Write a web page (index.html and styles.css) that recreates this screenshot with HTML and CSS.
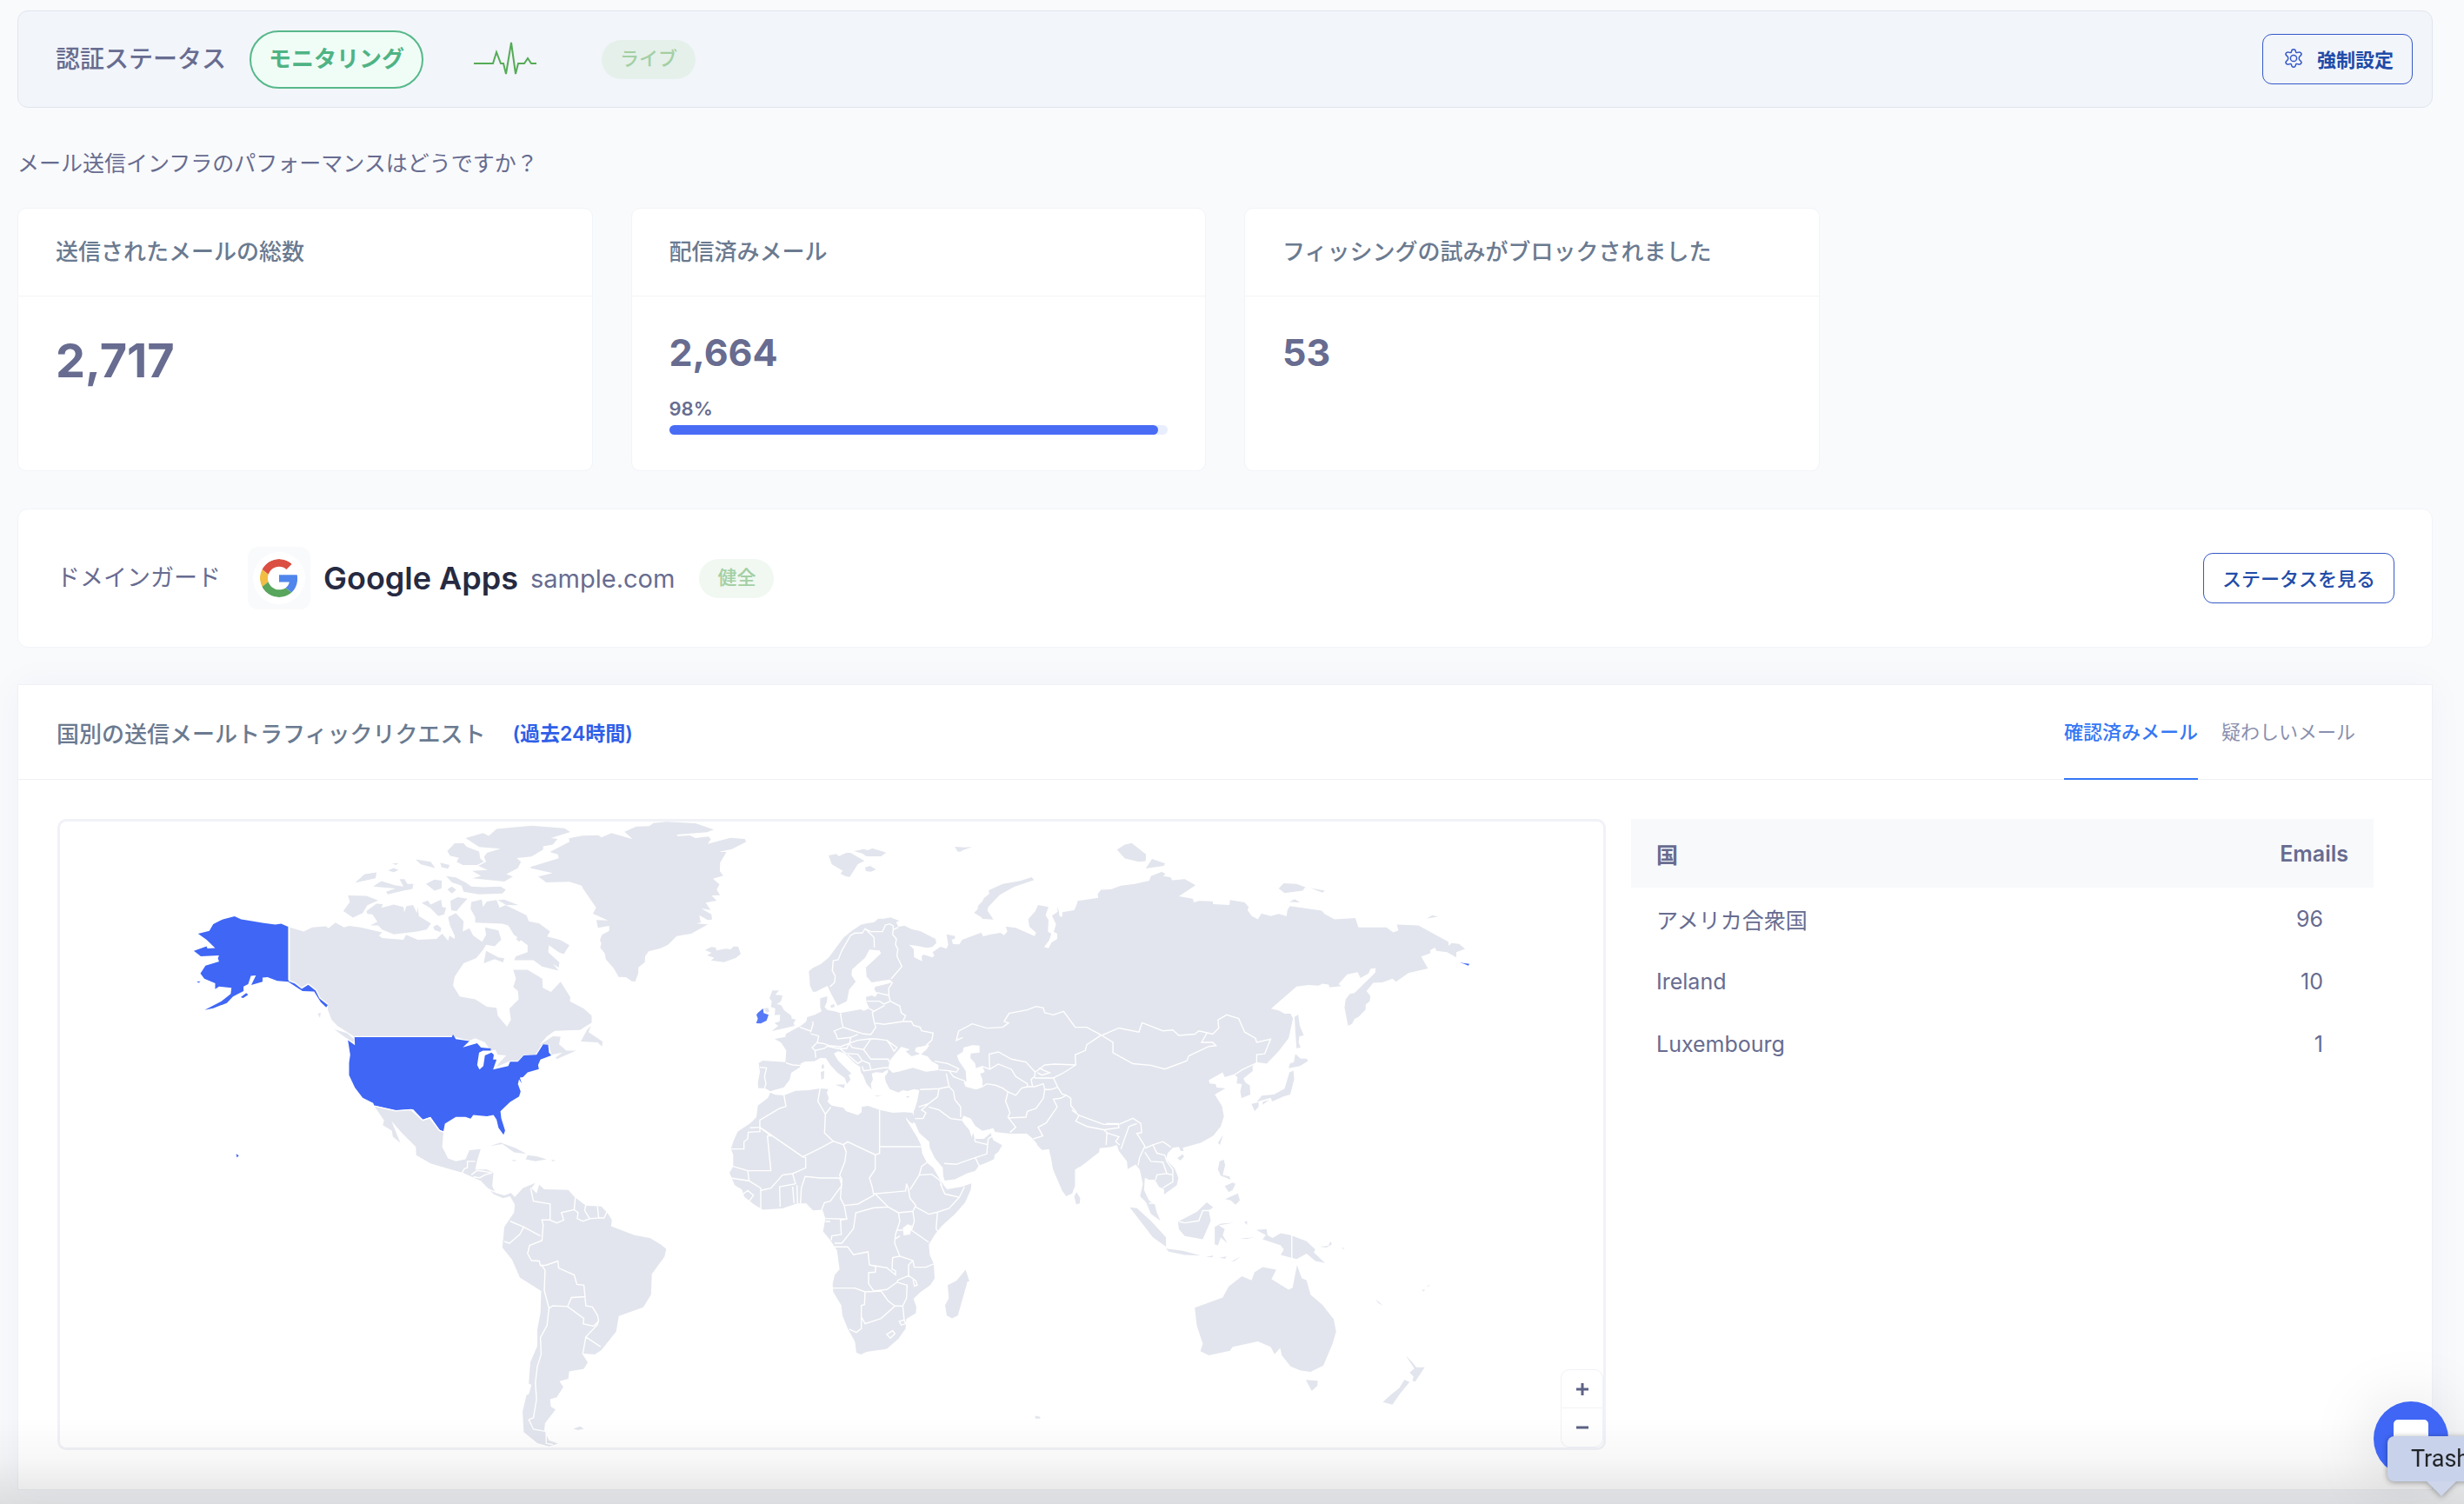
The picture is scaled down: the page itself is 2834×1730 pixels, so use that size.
FILE: index.html
```html
<!DOCTYPE html>
<html lang="ja">
<head>
    <meta charset="UTF-8">
    <meta name="viewport" content="width=device-width, initial-scale=1.0">
    <title>認証ステータス</title>
    <link rel="stylesheet" href="styles.css">
</head>
<body>
    <main class="page">
        <section class="status-bar">
            <h1 class="lead">認証ステータス</h1>
            <span class="mode">モニタリング</span>
            <svg class="pulse" viewBox="0 0 72 44" aria-hidden="true">
                <path d="M0 27h22l4-13 5 13h3l3 12L43 3l5 36 3-12h7l4-6 4 6h6"/>
            </svg>
            <span class="badge badge-live">ライブ</span>
            <button class="btn" type="button">
                <svg class="gear" viewBox="1 1 22 22" aria-hidden="true">
                    <path d="M9.6 4.2C9.8 2.2 10.600 1.800 12 1.800s2.200.4 2.400 2.400c.2 1.300 1 1.700 2.200 1.200 1.900-.8 3.300-.6 4.100.7s.2 2.400-1.400 3.600c-1.400 1.100-1.400 3.500 0 4.600 1.600 1.200 2.200 2.300 1.400 3.600s-2.200 1.500-4.100.7c-1.200-.5-2-.1-2.200 1.200-.2 2-1 2.400-2.400 2.400s-2.200-.4-2.400-2.400c-.2-1.300-1-1.700-2.200-1.200-1.900.8-3.300.6-4.100-.7s-.2-2.400 1.400-3.600c1.400-1.100 1.400-3.500 0-4.600-1.600-1.200-2.200-2.300-1.400-3.600s2.200-1.500 4.100-.7c1.200.5 2 .1 2.200-1.200z"/>
                    <circle cx="12" cy="12" r="3.600"/>
                </svg>
                強制設定
            </button>
        </section>

        <p class="question">メール送信インフラのパフォーマンスはどうですか？</p>

        <section class="cards">
            <article class="card">
                <h2 class="card-title">送信されたメールの総数</h2>
                <div class="card-body"><strong class="number number-big">2,717</strong></div>
            </article>
            <article class="card">
                <h2 class="card-title">配信済みメール</h2>
                <div class="card-body">
                    <strong class="number">2,664</strong>
                    <div class="percent">98%</div>
                    <div class="bar"><div class="bar-fill" style="width: 98%"></div></div>
                </div>
            </article>
            <article class="card">
                <h2 class="card-title">フィッシングの試みがブロックされました</h2>
                <div class="card-body"><strong class="number">53</strong></div>
            </article>
        </section>

        <section class="domain">
            <h2 class="lead lead-light">ドメインガード</h2>
            <span class="provider-logo">
                <svg viewBox="0 0 48 48" aria-hidden="true">
                    <path fill="#db4f42" d="M24 9.500c3.500 0 6.700 1.200 9.200 3.600l6.900-6.900C35.900 2.400 30.500 0 24 0 14.600 0 6.500 5.400 2.600 13.200l8 6.200C12.400 13.700 17.700 9.500 24 9.500z"/>
                    <path fill="#5086ec" d="M47 24.600c0-1.600-.2-3.100-.4-4.600H24v9h12.900c-.6 3-2.200 5.500-4.700 7.200l7.700 6c4.500-4.200 7.100-10.400 7.100-17.600z"/>
                    <path fill="#f1bd42" d="M10.500 28.600a14.500 14.500 0 0 1 0-9.200l-8-6.200a24 24 0 0 0 0 21.600z"/>
                    <path fill="#58a55c" d="M24 48c6.500 0 11.900-2.100 15.900-5.800l-7.700-6c-2.200 1.500-4.900 2.300-8.200 2.300-6.300 0-11.600-4.200-13.500-9.900l-8 6.200C6.500 42.600 14.600 48 24 48z"/>
                </svg>
            </span>
            <strong class="provider">Google Apps</strong>
            <span class="domain-name">sample.com</span>
            <span class="badge">健全</span>
            <button class="btn" type="button">ステータスを見る</button>
        </section>

        <section class="traffic">
            <header class="traffic-head">
                <h2 class="traffic-title">国別の送信メールトラフィックリクエスト</h2>
                <span class="period">(過去24時間)</span>
                <nav class="tabs">
                    <a class="tab active" href="#verified">確認済みメール</a>
                    <a class="tab" href="#suspicious">疑わしいメール</a>
                </nav>
            </header>
            <div class="traffic-body">
                <div class="map">
                    <svg class="world" viewBox="0 0 1775 720" role="img" aria-label="World map">
                        <!-- Americas -->
                        <g transform="translate(-9 -15) scale(.4464 .4719)">
                            <path class="land" d="M611 289L648 300 670 290 705 287 712 292 730 278 752 290 765 286 795 290 850 302 842 310 850 316 905 320 912 308 942 320 990 318 1005 305 1020 322 1024 310 1037 318 1037 310 1025 285 1020 265 1040 255 1060 275 1058 300 1075 292 1085 310 1108 325 1118 308 1115 290 1150 297 1157 320 1140 336 1118 332 1110 345 1092 365 1060 377 1037 410 1033 432 1050 458 1090 465 1120 483 1145 486 1148 505 1172 532 1182 515 1178 488 1202 465 1200 445 1188 435 1195 415 1188 393 1225 393 1263 415 1264 437 1285 447 1310 422 1335 460 1334 470 1370 488 1390 505 1390 522 1360 540 1295 542 1275 555 1255 577 1290 555 1310 556 1306 575 1325 590 1350 590 1300 611 1297 607 1315 595 1286 600 1280 575 1262 575 1245 600 1215 600 1200 615 1180 615 1145 630 1150 622 1170 602 1148 600 1142 588 1130 590 1115 570 1090 560 1075 566 1035 556 779 556 765 548 735 530 720 515 710 490 711 478 690 462 680 443 660 428 643 438 625 423 611 420Z"/>
                            <path class="land" d="M762 212L810 213 840 224 812 236 800 255 775 266 750 250 767 228ZM780 181L805 160 836 156 833 170ZM827 190L848 177 883 187 905 190 895 172 908 172 915 184 931 184 928 196 905 200 865 209 860 203 885 195ZM865 151L880 145 893 150 880 155ZM876 134L893 133 885 138ZM936 124L975 130 987 145 950 136ZM1000 132L1024 138 1020 147 1003 143ZM963 184L985 173 1004 176 1003 195 985 200ZM1018 197L1030 190 1041 198 1030 207ZM810 250L835 232 852 233 848 242 880 234 905 240 907 253 913 238 930 235 940 255 942 240 945 262 976 280 965 295 940 300 880 307 850 295 840 285 820 285 838 276 825 258 812 257ZM952 230L968 224 975 234 1002 222 1005 240 1015 242 1010 258 995 262 975 243ZM1026 225L1045 216 1070 220 1055 235 1042 250 1028 248ZM982 288L992 283 1003 292 1000 301 985 296ZM1015 165L1040 168 1065 180 1080 190 1110 192 1155 190 1169 198 1160 207 1100 209 1060 203 1055 188 1030 180ZM1018 104L1037 85 1060 85 1068 93 1100 105 1103 122 1112 130 1095 138 1058 138 1042 130 1048 120 1025 115ZM1065 72L1110 60 1125 67 1145 50 1235 42 1320 48 1335 57 1285 72 1302 74 1290 88 1265 92 1265 100 1235 117 1197 121 1208 130 1200 145 1170 160 1187 166 1165 178 1083 170 1105 164 1082 152 1122 150 1098 140 1118 130 1113 118 1120 108 1155 98 1100 94ZM1078 245L1080 228 1107 222 1110 240 1120 227 1145 223 1153 242 1168 235 1222 260 1228 275 1255 280 1283 300 1275 312 1308 320 1333 333 1318 355 1305 350 1280 333 1278 350 1307 375 1305 388 1290 378 1305 395 1262 385 1240 370 1190 370 1195 360 1225 350 1225 333 1190 308 1175 285 1160 281 1090 278 1090 265ZM1148 223L1165 222 1202 236 1170 235ZM1195 318L1205 310 1212 318 1203 325ZM1118 347L1150 363 1165 365 1162 375 1140 367 1112 377ZM684 500L692 498 690 510ZM727 538L760 548 778 562 776 570 755 558ZM1362 568L1378 540 1388 530 1382 545 1418 568 1417 580 1405 570Z"/>
                            <path class="land hot" d="M608 288L590 281 575 283 545 279 505 273 487 270 470 263 440 270 415 282 405 298 376 305 398 320 420 340 400 341 398 336 365 347 383 360 430 358 427 365 430 373 395 383 382 402 392 415 420 426 420 440 430 434 462 437 460 452 436 470 393 491 415 487 450 474 466 458 493 445 493 434 505 428 512 408 525 407 513 430 542 422 542 412 555 411 580 420 608 422 645 445 675 446 692 472 706 485 711 478 690 462 680 443 660 428 643 438 625 425 608 418ZM486 460L500 450 505 454 492 462ZM372 422L382 421 378 425ZM474 842L481 846 476 851Z"/>
                            <path class="land hot" d="M779 556L1030 556 1033 551 1040 562 1075 567 1058 582 1095 572 1105 583 1130 585 1130 590 1110 590 1100 595 1095 625 1101 636 1111 628 1115 602 1132 595 1138 600 1136 612 1145 612 1136 636 1175 628 1180 617 1200 617 1215 602 1248 600 1265 575 1278 576 1280 595 1286 602 1258 612 1252 625 1254 635 1225 643 1213 655 1205 656 1210 670 1203 660 1200 672 1207 690 1203 702 1180 715 1155 738 1157 755 1167 785 1163 795 1150 778 1145 758 1137 747 1120 750 1085 747 1078 756 1065 752 1040 752 1012 768 1008 787 998 783 975 752 955 758 930 733 885 736 830 724 827 718 800 705 780 680 765 650 765 620 768 600 762 565 780 577Z"/>
                            <path class="land" d="M830 725L885 737 925 734 955 760 973 754 998 785 1008 790 1005 825 1020 853 1040 860 1065 855 1075 833 1104 830 1095 858 1090 880 1120 880 1137 888 1134 920 1142 937 1165 943 1182 937 1192 947 1213 925 1245 913 1235 925 1248 938 1255 917 1268 928 1330 930 1345 946 1375 968 1415 970 1430 985 1442 1003 1440 1018 1500 1040 1540 1047 1570 1064 1582 1074 1578 1092 1545 1135 1543 1185 1523 1216 1460 1237 1453 1275 1415 1320 1398 1331 1365 1328 1380 1350 1370 1366 1332 1372 1330 1390 1307 1396 1317 1410 1300 1435 1283 1440 1285 1458 1297 1465 1270 1498 1268 1515 1280 1540 1303 1548 1280 1555 1250 1547 1215 1520 1212 1470 1222 1430 1228 1428 1235 1405 1228 1402 1232 1350 1250 1310 1250 1270 1258 1230 1260 1176 1205 1143 1185 1100 1160 1070 1165 1020 1190 985 1192 965 1180 945 1162 950 1137 940 1105 908 1058 888 1020 878 975 865 938 845 937 825 900 790 868 755 865 740 880 775 897 815 878 800 875 785 852 772 855 760Z"/>
                            <path class="land" d="M1128 823L1155 814 1195 828 1222 842 1190 838 1160 818ZM1225 845L1250 848 1274 855 1245 860 1220 855ZM1185 856L1200 858 1188 860ZM1287 856L1298 858 1288 860ZM1343 1512L1360 1506 1370 1512 1355 1515Z"/>
                            <path class="border" d="M611 288L611 420 625 425 643 438 660 428 680 443 690 462 711 478M779 556L1030 556M830 725L885 737 925 734 955 760 973 754 998 785 1008 788"/>
                            <path class="border" d="M1056 888L1062 878 1070 875 1070 860 1090 860M1080 893L1095 882 1130 887M1085 898L1102 900 1115 893 1134 888M1118 925L1140 935M1233 925L1240 957 1283 964 1283 1003 1262 1003 1265 1015 1262 1053 1230 1065 1225 1085 1235 1102 1255 1103 1258 1114 1273 1113 1303 1103 1305 1120 1345 1137 1352 1160 1370 1162 1373 1190 1338 1192 1328 1214 1290 1212 1280 1218 1268 1175 1270 1125 1260 1112M1283 1003L1300 1010 1318 1003 1312 985 1345 978 1348 948M1345 978L1355 985 1353 1000 1368 1006 1385 1000 1372 980 1375 966M1385 1000L1408 998 1405 970M1408 998L1422 998 1430 982M1180 1006L1215 1020 1258 1042M1215 1020L1205 1038 1178 1060 1165 1055M1373 1190L1375 1212 1392 1215 1405 1235 1408 1250 1395 1262 1368 1256 1370 1243 1328 1214M1408 1245L1405 1258 1375 1288 1413 1312M1375 1288L1367 1330M1280 1218L1275 1260 1258 1290 1260 1330 1250 1360 1245 1400 1248 1440 1240 1485 1228 1490 1240 1513 1270 1518M1273 1520L1273 1548 1290 1550"/>
                        </g>
                        <!-- Greenland, Iceland -->
                        <g transform="translate(431 -15) scale(.3333)">
                            <path class="land" d="M330 202L428 172 425 158 397 150 465 115 463 103 510 94 565 92 575 100 610 85 683 106 655 80 695 62 740 61 755 50 800 46 900 51 963 73 940 82 835 90 838 95 880 93 900 102 945 97 953 106 942 122 1020 101 1070 105 1075 115 1025 140 980 150 1007 150 985 187 984 217 996 232 960 242 983 262 973 280 985 299 955 300 973 318 935 325 952 350 920 345 955 365 957 383 942 385 913 368 918 393 903 397 943 400 885 432 835 440 805 470 780 482 738 493 726 510 725 530 703 548 702 570 692 597 680 596 660 582 635 581 618 552 590 520 587 500 571 480 575 465 570 455 577 436 602 422 602 405 563 412 558 385 598 386 546 363 557 342 512 277 507 266 465 253 385 255 357 235 407 223 332 206ZM933 488L955 478 970 480 972 490 1005 484 1022 486 1030 476 1047 476 1056 502 1040 515 998 530 953 524 965 515 940 507 955 498Z"/>
                        </g>
                        <!-- Europe, Africa, Middle East -->
                        <g transform="translate(751 -15) scale(.3333)">
                            <path class="land" d="M345 632L335 612 331 562 345 550 372 537 400 514 450 446 475 425 510 401 532 396 555 393 571 380 590 380 613 376 643 388 632 392 640 408 661 404 685 416 715 423 768 450 771 464 757 478 738 481 700 473 677 470 693 485 694 513 722 527 720 510 727 504 757 514 764 508 758 496 785 477 806 484 812 470 806 434 836 440 834 450 824 452 828 468 850 469 860 453 926 428 932 441 960 434 992 429 1005 437 1016 424 1010 407 1045 412 1110 440 1115 428 1092 408 1088 382 1112 355 1122 333 1158 340 1148 368 1158 385 1156 425 1168 432 1160 455 1143 478 1158 482 1168 463 1188 450 1188 432 1176 425 1184 400 1170 370 1190 356 1188 338 1194 355 1196 372 1205 374 1206 358 1250 350 1267 361 1257 320 1262 318 1262 1200 1165 1200 1160 1175 1135 1178 1118 1160 1122 1150 1105 1140 1083 1122 1025 1122 973 1116 968 1103 930 1112 905 1095 890 1070 865 1060 858 1075 868 1090 885 1110 893 1135 898 1118 903 1140 935 1140 958 1120 968 1145 998 1162 985 1185 972 1195 970 1210 945 1222 918 1232 905 1250 875 1260 855 1270 835 1280 800 1284 795 1270 793 1240 765 1205 748 1170 746 1150 712 1120 697 1085 690 1082 693 1045 697 1035 705 1010 712 972 695 968 672 975 655 972 640 980 610 968 597 945 593 925 603 912 605 900 585 912 562 910 548 915 552 935 545 950 548 970 530 950 518 920 510 910 508 892 490 880 455 845 432 838 417 845 432 870 460 898 478 915 468 920 475 935 462 950 455 930 430 912 405 885 390 862 372 860 350 872 318 873 303 880 300 893 270 912 265 935 245 962 210 972 198 976 180 965 157 965 155 945 162 910 158 878 172 870 250 875 253 835 235 808 213 795 250 788 252 778 287 758 300 752 322 735 325 720 352 712 375 700 370 685 370 655 395 648 393 668 385 685 395 695 420 700 440 706 510 693 520 698 540 690 530 668 528 650 548 645 560 650 568 640 557 625 560 615 620 600 610 590 548 600 530 580 528 548 580 500 575 490 540 487 525 515 480 555 478 575 493 598 470 625 462 665 430 680 408 640 395 612 355 632Z"/>
                            <path class="land" d="M198 980L215 988 245 990 285 974 330 972 370 966 398 968 393 980 400 1000 395 1012 410 1025 450 1033 460 1045 500 1058 513 1048 513 1030 535 1026 575 1040 620 1050 660 1048 688 1050 695 1065 690 1088 680 1082 665 1065 668 1075 705 1135 718 1162 722 1190 738 1222 760 1240 782 1278 800 1305 808 1314 860 1305 892 1294 890 1315 870 1360 835 1400 790 1440 765 1472 745 1505 748 1540 762 1572 765 1622 750 1645 715 1670 692 1692 702 1720 700 1742 667 1762 665 1795 640 1830 600 1865 565 1870 530 1875 511 1884 495 1878 490 1840 465 1795 447 1750 443 1715 415 1668 413 1642 420 1610 437 1590 428 1525 405 1490 380 1460 388 1415 378 1385 345 1387 322 1363 290 1363 240 1380 172 1385 140 1365 108 1340 100 1315 75 1300 57 1257 70 1235 70 1195 62 1175 70 1150 85 1115 130 1085 150 1065 155 1025 190 998ZM872 1592L885 1632 878 1632 875 1645 845 1750 825 1760 807 1750 801 1715 814 1690 810 1645 840 1630Z"/>
                            <path class="land" d="M205 628L228 628 215 643 240 645 235 665 220 675 235 678 245 695 270 715 272 725 286 728 278 740 282 750 240 760 203 768 225 750 212 740 230 735 232 712 213 713 215 690 200 685 203 665 195 655ZM175 690L190 688 195 700 185 705ZM375 885L383 883 383 897 375 898ZM372 910L384 905 383 932 374 935ZM422 953L455 952 453 965ZM405 680L418 674 420 685 408 688ZM558 990L583 992 565 994ZM665 994L680 992 672 999ZM399 162L425 157 435 164 460 153 475 153 523 181 500 192 472 236 458 234 440 225 448 215 410 192ZM487 147L520 140 535 144 550 137 598 152 580 165 530 165 515 155ZM525 203L543 198 563 211 545 218 528 216ZM835 132L870 134 895 132 868 142 852 150 843 147ZM901 360L913 348 915 335 930 320 935 310 953 295 952 282 1000 260 1060 250 1100 237 1108 247 1040 270 990 298 950 340 947 352 968 383 930 381 925 374Z"/>
                            <path class="sea" d="M605 897L610 870 622 855 650 822 680 832 665 838 685 855 715 847 697 838 700 825 748 815 738 830 718 848 740 855 755 872 778 885 778 903 735 908 690 895 640 908 620 912ZM865 825L895 817 920 818 920 842 890 845 888 860 905 880 908 898 930 890 938 910 922 915 930 935 930 962 908 970 872 960 865 945 875 940 872 905 848 870 842 852 862 840ZM655 1448L672 1435 687 1440 680 1470 658 1473Z"/>
                            <path class="land hot-soft" d="M173 690L155 705 150 712 155 725 149 741 165 742 185 732 192 712 175 706Z"/>
                            <path class="land hot" d="M339 772h3v4h-3z"/>
                        </g>
                        <!-- Asia, Oceania -->
                        <g transform="translate(1071 -15) scale(.4592 .4719)">
                            <path class="land" d="M218 225L268 218 267 208 275 198 300 197 325 188 360 184 396 176 400 165 428 154 437 160 430 164 450 168 453 175 485 172 512 187 470 214 505 220 508 229 520 225 555 226 556 233 597 235 598 223 635 229 645 240 642 248 653 262 668 270 677 256 700 262 720 257 740 262 742 248 748 238 828 249 835 257 860 270 912 267 920 290 990 290 1007 302 1020 297 1016 283 1070 285 1145 325 1146 335 1153 328 1172 330 1187 342 1165 350 1165 363 1142 350 1115 347 1112 339 1100 345 1100 353 1077 361 1094 390 1045 401 1014 422 1005 415 980 424 957 425 940 445 950 457 948 470 938 478 938 490 920 508 910 513 904 525 894 530 885 485 888 465 898 452 910 450 962 400 963 389 950 391 945 402 925 413 918 399 892 404 870 428 877 433 848 436 845 429 830 427 820 432 795 430 765 434 701 488 720 492 735 500 750 500 756 512 745 560 720 592 690 622 665 618 655 628 655 640 632 658 637 668 648 675 649 697 627 706 624 690 628 672 615 670 617 655 608 648 585 655 580 643 545 662 547 670 562 672 565 680 587 682 560 697 578 725 583 750 575 775 556 798 525 815 480 827 482 835 475 835 470 825 455 827 442 840 438 855 460 878 469 900 465 918 433 941 433 928 420 922 410 905 395 905 385 900 383 930 395 955 410 965 415 985 424 1005 400 988 388 960 373 945 380 915 372 880 362 868 342 879 340 860 320 835 315 820 300 825 272 828 270 838 228 870 210 880 210 920 203 938 188 945 178 932 155 880 146 830 128 832 104 805 95 793 100 500Z"/>
                            <path class="land" d="M510 1217L580 1192 595 1165 628 1140 652 1150 660 1130 680 1118 714 1124 702 1147 745 1173 755 1168 766 1113 778 1145 790 1150 800 1185 830 1210 858 1245 864 1275 855 1305 832 1358 800 1373 775 1370 750 1360 728 1333 724 1315 710 1330 700 1312 668 1299 605 1312 598 1322 545 1333 524 1323 530 1305 515 1260 512 1235ZM788 1393L818 1395 817 1407 803 1420ZM1038 1333L1055 1350 1065 1362 1086 1362 1062 1397 1055 1395 1058 1385 1048 1375 1060 1365ZM1035 1392L1048 1398 1025 1425 1005 1453 981 1447 1000 1430 1022 1413ZM664 1027L690 1025 692 1040 705 1047 725 1035 750 1040 790 1055 812 1075 808 1082 836 1108 812 1103 790 1085 765 1098 725 1088 733 1075 725 1065 680 1050 688 1040ZM823 1068L845 1066 850 1055 853 1062 840 1070ZM347 972L365 974 400 1005 438 1045 438 1068 405 1045ZM438 1073L480 1078 525 1090 485 1088 445 1080ZM468 1007L515 983 540 960 556 972 545 980 550 1005 530 1050 485 1042 470 1025ZM560 1020L575 1012 608 1010 570 1016 585 1025 580 1040 592 1060 575 1045 568 1065 560 1062ZM634 1008L641 1005 641 1015ZM538 1093L555 1090 555 1094ZM570 1095L590 1092 586 1097ZM600 1105L625 1092 610 1103ZM622 1048L660 1045 640 1049ZM572 860L583 856 586 870 580 893 597 897 600 905 575 895 568 880ZM585 920L605 912 612 915 605 930 595 935ZM586 952L618 938 623 955 612 966 600 955ZM568 815L581 795 573 820ZM466 852L480 843 483 848 474 858ZM208 945L214 935 223 950 222 962 213 965ZM760 508L769 502 773 530 783 553 772 555 770 570 775 582 765 585 762 545ZM762 598L775 610 791 610 793 616 773 628 745 633 748 622 758 618ZM747 643L757 639 759 660 749 697 732 702 704 714 700 705 665 715 678 700 708 697 735 683ZM652 720L670 716 670 727 660 738ZM680 715L697 710 680 722ZM315 100L335 88 352 84 388 112 387 128 370 130 335 122ZM387 146L403 123 436 134 432 140ZM720 195L733 182 765 184 787 192 780 200 735 206ZM800 194L836 200 830 205ZM747 228L760 221 774 229ZM1091 268L1105 260 1119 264ZM110 1480L123 1483 123 1487 111 1487ZM962 1195L982 1212 970 1206ZM878 1070L885 1076 882 1070ZM1079 1173L1087 1173 1083 1177ZM1090 1164L1100 1161 1095 1165Z"/>
                            <path class="land hot" d="M1173 375L1185 377 1198 379 1195 383 1185 379Z"/>
                            <path class="border" d="M277 553L320 535 370 545 378 522 430 542 455 540 470 553 510 550 520 542 555 550 570 535 568 515 590 503 620 512 635 545 662 560 665 570 700 562 685 598 665 600 665 620 630 636 608 650M277 553L305 570 305 595 355 622 400 626 435 635 490 615 495 603 545 580 563 578 555 570 527 570 540 548M202 735L220 748 282 770 320 770 355 755 375 768 377 790 365 792 385 823 372 850 368 870M220 748L212 762 240 775 282 783 320 778 318 768 288 768M282 783L290 790 288 820M288 790L320 800 312 812 322 820M365 768L345 775 325 830M385 828L405 820 430 812 450 825M405 820L415 840 435 845 440 860 455 880 455 910 430 925M385 838L400 860 430 862 440 890 415 893 412 905M440 890L455 893M395 962L410 962M470 1007L485 1010 520 1005 530 980 550 980M753 1040L753 1098"/>
                        </g>
                        <!-- Borders of Europe, Africa and Central Asia -->
                        <g transform="translate(751 -15) scale(.3333)">
                            <path class="border" d="M404 615L420 600 422 578 412 560 415 525 432 522 445 490 475 438 490 430 515 430 525 415 556 445 557 480M525 415L545 425 585 425 595 402 610 398 622 405 622 418 640 410M622 418L620 435 633 450 630 470 638 485 635 510 652 545 615 588M620 600L607 620 607 645 612 665 590 675 575 665 530 665M565 635L607 645M612 665L645 682 650 705 665 715 655 735 685 735 692 748 715 755 720 767 760 775 755 800 735 818M540 690L555 700 592 680M555 700L550 705 557 740 590 745 655 735M440 706L445 740 450 755 470 762 520 778 545 780 562 755 557 740M450 755L418 768 425 780 430 795 475 790 500 780M475 790L472 810 440 822 400 818 385 812 360 808 365 785 340 778 338 768 300 755M338 768L345 745 345 735M360 808L342 825 352 835 355 860M352 835L385 828 395 820 430 828 462 828 470 810 500 800 540 795 562 795 600 800 615 820 625 838 635 825 600 800M470 810L480 825 520 832 545 795M520 832L545 865 605 865 608 875M440 830L458 845 500 848 515 870 500 880 465 850M515 870L540 880 545 902 520 905 515 890M545 902L590 895 605 895M252 878L275 885 303 887M162 893L185 895 178 925 183 950 178 965M765 872L810 880 848 898 840 910 815 905 780 902M815 905L830 925 855 935 870 940M805 915L815 960 830 975 835 1005 855 1030 855 1065M815 960L780 967 715 970M780 967L775 995 745 1018 710 1030M745 1018L720 1040 735 1050 725 1070 697 1070M745 1030L780 1040 820 1070 858 1075M903 1140L905 1150 948 1160 950 1140 965 1130M948 1160L945 1192 905 1205 920 1235M905 1205L855 1222 840 1228 798 1225M930 960L945 950 975 955 1000 965 1018 978 1010 1010 1025 1050 1018 1065 1045 1100 1025 1118M1018 978L1045 990 1065 965 1085 960 1110 960 1140 950 1145 970 1165 970 1190 962M1145 970L1140 1000 1115 1035 1085 1045 1080 1065 1018 1068M1190 962L1205 985 1220 990 1235 1000 1235 1025 1255 1050M1220 990L1200 1000 1175 1003 1188 1030 1150 1085 1122 1100 1138 1130 1105 1140M908 898L930 890 955 900 985 882 1030 900 1045 925 1085 950 1085 960M955 900L953 848 985 840 1030 865 1080 875 1112 910 1110 925 1098 935 1103 960M1112 910L1145 885 1180 882 1252 885M1125 895L1145 905 1162 912 1135 920 1120 912M1110 930L1175 930 1190 962M1175 930L1205 915 1252 885 1250 850 1285 835 1290 815 1340 782M862 790L840 800 848 768 895 743 945 758 1000 755 1020 740 1005 735 1022 707 1085 695 1115 683 1140 688 1145 705 1175 712 1210 700 1250 755 1290 755 1340 782"/>
                            <path class="border" d="M245 990L252 1028 230 1035 162 1075 162 1115 122 1117 120 1140 107 1150 107 1175 62 1175M162 1100L128 1102M162 1100L310 1202 375 1170 415 1148 385 1120 388 1055 362 1010 370 966M388 1055L407 1030M415 1148L450 1160 465 1150 560 1195 560 1245 540 1275 550 1308 555 1335 500 1365 453 1370 440 1345 445 1280 437 1265 455 1220 460 1185 450 1160M575 1040L575 1190 560 1195M575 1167L718 1167M162 1100L200 1130 188 1130 200 1250 120 1250 70 1235M120 1250L125 1285 60 1275M125 1285L165 1310 165 1385M310 1202L320 1205 320 1240 275 1260 240 1265 200 1310 165 1318M275 1260L285 1295 230 1305 232 1375M275 1305L280 1363M290 1300L292 1363M302 1363L305 1310 318 1270 370 1275 437 1275 445 1300 405 1355 385 1360 375 1385M105 1330L120 1318 140 1335 125 1355M388 1415L462 1417 453 1370M462 1417L440 1420 443 1470 410 1475 408 1490M388 1425L405 1425M420 1500L445 1500 485 1450 493 1395 555 1378 605 1375 560 1330M605 1375L640 1395 690 1390 700 1370 680 1345 675 1315 668 1295 665 1320 610 1325 555 1330M680 1315L712 1265 720 1235 738 1222M712 1265L755 1262 785 1285 790 1305M785 1295L800 1330 850 1342 868 1305M850 1342L815 1380 775 1393 745 1400 700 1375M775 1393L770 1450 780 1465M690 1390L695 1425 685 1455 745 1497M640 1395L645 1425 630 1470 627 1500 645 1545 690 1560 695 1583 735 1583 762 1572M635 1455L655 1455M630 1485L645 1475M420 1513L465 1513 485 1540 535 1530 540 1575 600 1585 630 1610 630 1595 618 1590 620 1550 645 1545M540 1575L562 1580 560 1600 537 1602 537 1640 555 1665 600 1660 635 1635 670 1645 668 1690 655 1717 628 1717 605 1700 580 1665 525 1668 490 1655 413 1655M690 1560L675 1575 675 1612 638 1628 635 1635M675 1612L700 1630 705 1645 695 1648 690 1620M525 1668L523 1712 512 1715 512 1795 495 1808 470 1797M512 1755L525 1778 580 1760 628 1717M655 1717L660 1765 665 1778 650 1783 643 1770 660 1765M600 1815L620 1802 628 1812 612 1828Z"/>
                        </g>
                    </svg>
                    <div class="zoom">
                        <button type="button" aria-label="Zoom in"><svg viewBox="0 0 14 14"><path d="M7 0v14M0 7h14"/></svg></button>
                        <button type="button" aria-label="Zoom out"><svg viewBox="0 0 14 14"><path d="M0 7h14"/></svg></button>
                    </div>
                </div>
                <table class="countries">
                    <thead>
                        <tr><th>国</th><th>Emails</th></tr>
                    </thead>
                    <tbody>
                        <tr><td>アメリカ合衆国</td><td>96</td></tr>
                        <tr><td>Ireland</td><td>10</td></tr>
                        <tr><td>Luxembourg</td><td>1</td></tr>
                    </tbody>
                </table>
            </div>
        </section>
    </main>

    <div class="bottom-shade"></div>
    <button class="chat" type="button" aria-label="Chat">
        <svg viewBox="0 0 40 44" aria-hidden="true"><path d="M5 0h30a5 5 0 0 1 5 5v38l-9-6H5a5 5 0 0 1-5-5V5a5 5 0 0 1 5-5z"/></svg>
    </button>
    <div class="tooltip">Trash</div>
</body>
</html>
```

FILE: styles.css
```css
* {
    box-sizing: border-box;
}
body {
    margin: 0;
    background-color: #f9fafc;
    color: #676c90;
    font-family: Inter, "Noto Sans CJK JP", sans-serif;
    font-size: 25px;
}
h1, h2, p {
    margin: 0;
}
button {
    font-family: inherit;
    cursor: pointer;
}
.page {
    padding: 12px 36px 17px 20px;
}
.status-bar {
    display: flex;
    align-items: center;
    height: 112px;
    padding: 0 22px 0 43px;
    border: 1px solid #e1e6ed;
    border-radius: 12px;
    background-color: #f2f5fa;
}
.lead {
    font-size: 28px;
    font-weight: 500;
    line-height: 40px;
}
.lead-light {
    font-size: 27px;
    font-weight: 400;
}
.mode {
    height: 67px;
    margin-left: 27px;
    padding: 0 20px;
    border: 2px solid #57b88a;
    border-radius: 34px;
    background-color: #f0fdf7;
    color: #4fb384;
    font-size: 26px;
    font-weight: 600;
    line-height: 61px;
}
.pulse {
    width: 72px;
    height: 44px;
    margin: 0 75px 0 58px;
    fill: none;
    stroke: #55ab57;
    stroke-width: 2;
}
.badge {
    height: 45px;
    padding: 0 21px;
    border-radius: 23px;
    background-color: #f0f8f1;
    color: #a3cfa3;
    font-size: 22px;
    font-weight: 500;
    line-height: 43px;
}
.badge-live {
    background-color: #e5f0eb;
}
.btn {
    display: flex;
    align-items: center;
    gap: 16px;
    height: 58px;
    margin-left: auto;
    padding: 0 21px 2px;
    border: 1px solid #3558c8;
    border-radius: 11px;
    background-color: transparent;
    color: #204ba8;
    font-size: 22px;
    font-weight: 500;
}
.status-bar .btn {
    padding-left: 24px;
    font-weight: 600;
}
.gear {
    width: 22px;
    height: 22px;
    fill: none;
    stroke: #3558c8;
    stroke-width: 1.5;
}
.question {
    margin: 44px 0 31px;
    line-height: 40px;
}

/* stat cards */
.cards {
    display: grid;
    grid-template-columns: repeat(4, 1fr);
    gap: 44px;
}
.card {
    min-height: 303px;
    border: 1px solid #f1f4f8;
    border-radius: 10px;
    background-color: #fff;
}
.card-title {
    height: 101px;
    padding: 0 43px;
    border-bottom: 1px solid #f1f4f8;
    color: #6a7a90;
    font-size: 26px;
    font-weight: 500;
    line-height: 100px;
}
.card-body {
    padding: 34px 43px;
}
.number {
    display: block;
    font-size: 43px;
    font-weight: 700;
    line-height: 60px;
}
.number-big {
    font-size: 54px;
    line-height: 80px;
}
.percent {
    margin-top: 19px;
    font-size: 22px;
    font-weight: 600;
    line-height: 32px;
}
.bar {
    height: 11px;
    margin-top: 3px;
    border-radius: 6px;
    background-color: #e9eefe;
}
.bar-fill {
    height: 100%;
    border-radius: 6px;
    background-color: #496cf5;
}

/* domain guard */
.domain {
    display: flex;
    align-items: center;
    height: 160px;
    margin-top: 43px;
    padding: 0 43px 0 44px;
    border: 1px solid #f1f4f8;
    border-radius: 12px;
    background-color: #fff;
}
.provider-logo {
    display: flex;
    align-items: center;
    justify-content: center;
    width: 72px;
    height: 72px;
    margin: 0 15px 0 31px;
    border-radius: 12px;
    background-color: #f9fafc;
}
.provider-logo svg {
    width: 60px;
    height: 60px;
    padding: 8px;
    border-radius: 50%;
    background-color: #fff;
}
.provider {
    color: #262a42;
    font-size: 36px;
    font-weight: 600;
}
.domain-name {
    margin: 0 28px 0 14px;
    font-size: 29px;
}

/* traffic by country */
.traffic {
    margin-top: 42px;
    border: 1px solid #eff1f5;
    background-color: #fff;
    box-shadow: 0 0 40px rgba(40, 60, 110, 0.04);
}
.traffic-head {
    display: flex;
    align-items: center;
    height: 109px;
    padding: 0 88px 0 44px;
    border-bottom: 1px solid #eff1f5;
}
.traffic-title {
    color: #6a7a90;
    font-size: 26px;
    font-weight: 500;
}
.period {
    margin-left: 31px;
    color: #2f5fe8;
    font-size: 23px;
    font-weight: 600;
}
.tabs {
    display: flex;
    gap: 27px;
    margin-left: auto;
}
.tab {
    height: 110px;
    border-bottom: 2px solid transparent;
    color: #8a8fae;
    font-size: 22px;
    line-height: 110px;
    text-decoration: none;
}
.tab.active {
    border-color: #3577f5;
    color: #3577f5;
    font-weight: 500;
}
.traffic-body {
    display: flex;
    align-items: flex-start;
    gap: 29px;
    padding: 45px 67px 45px 45px;
}
.map {
    position: relative;
    flex: 1775;
    border: 3px solid #f1f2f7;
    border-radius: 10px;
}
.world {
    display: block;
    width: 100%;
}
.land {
    fill: #e2e5ed;
}
.sea {
    fill: #fff;
}
.hot {
    fill: #3f66f5;
}
.hot-soft {
    fill: #567af7;
}
.border {
    fill: none;
    stroke: #fff;
    stroke-width: 1.4px;
    vector-effect: non-scaling-stroke;
}
.zoom {
    position: absolute;
    right: 0;
    bottom: 0;
    display: flex;
    flex-direction: column;
    width: 49px;
}
.zoom button {
    height: 45px;
    padding: 0;
    border: 1px solid #f1f2f7;
    border-radius: 10px 10px 0 0;
    background-color: #fff;
}
.zoom button + button {
    border-top: 0;
    border-radius: 0 0 10px 10px;
}
.zoom svg {
    display: block;
    width: 14px;
    height: 14px;
    margin: 0 auto;
    fill: none;
    stroke: #5d6286;
    stroke-width: 3;
}
.countries {
    flex: 854;
    border-collapse: collapse;
    table-layout: fixed;
}
.countries th {
    height: 79px;
    padding: 0 29px;
    background-color: #f8f9fb;
    font-weight: 600;
    text-align: left;
}
.countries td {
    height: 72px;
    padding: 0 29px;
}
.countries th:last-child,
.countries td:last-child {
    text-align: right;
}
.countries td:last-child {
    padding-right: 58px;
}

/* floating items */
.bottom-shade {
    position: fixed;
    right: 0;
    bottom: 0;
    left: 0;
    height: 100px;
    background: linear-gradient(rgba(0, 0, 0, 0), rgba(0, 0, 0, 0.03) 50%, rgba(0, 0, 0, 0.11));
    pointer-events: none;
}
.chat {
    position: fixed;
    right: 18px;
    bottom: 32px;
    width: 86px;
    height: 86px;
    padding: 0;
    border: 0;
    border-radius: 50%;
    background-color: #3f66f5;
    box-shadow: 0 4px 80px rgba(0, 0, 0, 0.14);
}
.chat svg {
    display: block;
    width: 40px;
    height: 44px;
    margin: 0 auto;
    fill: #fff;
}
.tooltip {
    position: fixed;
    bottom: 26px;
    left: calc(100% - 88px);
    height: 52px;
    padding: 0 27px;
    border-radius: 8px;
    background-color: #c8d2ea;
    color: #222428;
    font-family: Roboto, sans-serif;
    font-size: 27px;
    line-height: 52px;
    filter: drop-shadow(0 1px 3px rgba(0, 0, 0, 0.35));
}
.tooltip::after {
    position: absolute;
    top: 52px;
    left: 45px;
    border: 17px solid transparent;
    border-top-color: #cdd6ea;
    border-bottom: 0;
    content: "";
}
```
